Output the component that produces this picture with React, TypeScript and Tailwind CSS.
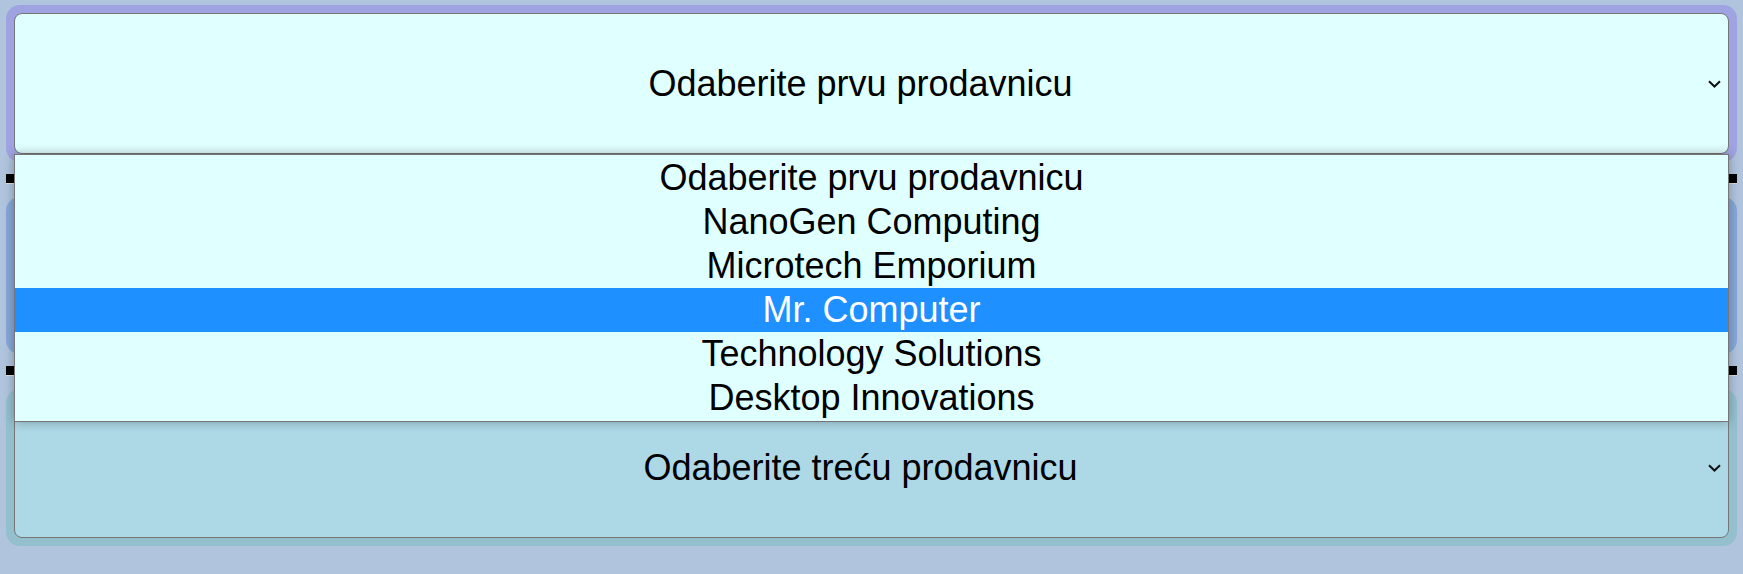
const stores = [
  "Odaberite prvu prodavnicu",
  "NanoGen Computing",
  "Microtech Emporium",
  "Mr. Computer",
  "Technology Solutions",
  "Desktop Innovations",
];

const Chevron = () => (
  <svg width="13" height="8" viewBox="0 0 13 8" className="absolute right-[7px] top-1/2 -translate-y-1/2">
    <path d="M1 1.2 L6.5 6.5 L12 1.2" fill="none" stroke="#111" strokeWidth="2" />
  </svg>
);

const FakeSelect = ({ label, ring, bg }: { label?: string; ring: string; bg: string }) => (
  <div className={`p-2 rounded-[14px] ${ring}`}>
    <div
      className={`relative h-[141px] rounded-[8px] border border-[#767676] ${bg} flex items-center justify-center pr-[22px]`}
    >
      {label && <span className="text-[36px] text-black leading-[42px]">{label}</span>}
      <Chevron />
    </div>
  </div>
);

const Separator = () => (
  <div className="h-[10px] bg-black border-b border-[#dcdcdc]" />
);

export default function App() {
  return (
    <div
      className="min-h-[574px] bg-[#b0c4de] px-[6px] pt-[5px] pb-[28px]"
      style={{ fontFamily: '"Liberation Sans", Arial, sans-serif' }}
    >
      <div className="relative flex flex-col">
        <FakeSelect label="Odaberite prvu prodavnicu" ring="bg-[#9fa3e1]" bg="bg-[#e0ffff]" />
        <div className="pt-[12px] pb-[13px]">
          <Separator />
        </div>
        {/* second select sits fully under the open list */}
        <FakeSelect ring="bg-[#87a7d9]" bg="bg-[#b9d6f2]" />
        <div className="pt-[12px] pb-[13px]">
          <Separator />
        </div>
        <FakeSelect label="Odaberite treću prodavnicu" ring="bg-[#94c0ce]" bg="bg-[#add8e6]" />

        {/* open dropdown of the first select */}
        <div className="absolute left-[8px] right-[8px] top-[149px] z-10 border border-[#767676] bg-[#e0ffff] pt-[1px] pb-[1px] shadow-[0_0_10px_rgba(0,0,0,0.3)]">
          {stores.map((s, i) => (
            <div
              key={s}
              className={`h-[44px] text-center text-[36px] leading-[44px] ${
                i === 3 ? "bg-[#1e90ff] text-white" : "text-black"
              }`}
            >
              {s}
            </div>
          ))}
        </div>
      </div>
    </div>
  );
}
